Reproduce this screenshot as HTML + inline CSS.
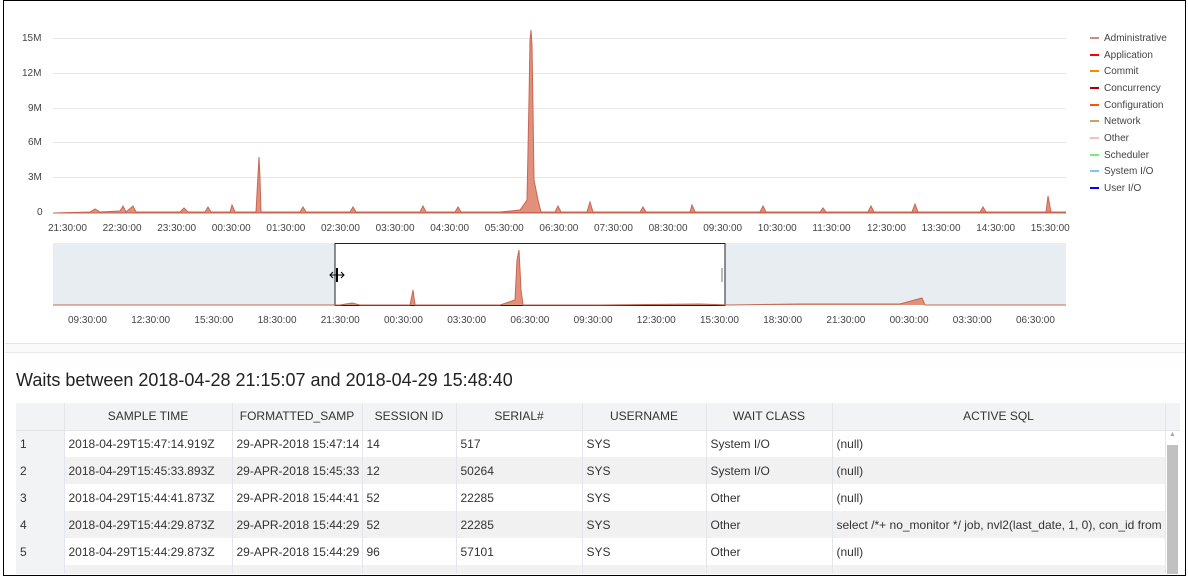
<!DOCTYPE html>
<html><head><meta charset="utf-8"><style>
body{margin:0;width:1188px;height:577px;background:#fff;font-family:"Liberation Sans",sans-serif;overflow:hidden;position:relative}
.frame{position:absolute;left:3px;top:0;width:1183px;height:576px;border:1px solid #000;box-sizing:border-box;z-index:5;pointer-events:none}
.lbl{position:absolute;font-size:10px;color:#444}
.leg{position:absolute;left:1090px;font-size:10px;color:#444}
.leg i{display:inline-block;width:9px;height:2px;margin-right:5px;vertical-align:middle}
.tw{position:absolute;left:16px;top:403px;width:1164px;height:171px;overflow:hidden}
table{border-collapse:collapse;font-size:12px;color:#333;table-layout:fixed;width:1164px}
td,th{height:27px;padding:0 4px;white-space:nowrap;overflow:hidden;text-overflow:clip;border-right:1px solid #e3e6ea;box-sizing:border-box}
th{background:#f1f3f5;font-weight:normal;text-align:center;border-bottom:1px solid #e3e6ea}
tr:nth-child(odd) td{background:#f1f1f1}
td:first-child{background:#f1f3f5!important}
</style></head><body>
<div class="frame"></div>
<div class="lbl" style="left:22px;top:33px">15M</div>
<div class="lbl" style="left:22px;top:68px">12M</div>
<div class="lbl" style="left:28px;top:103px">9M</div>
<div class="lbl" style="left:28px;top:137px">6M</div>
<div class="lbl" style="left:28px;top:172px">3M</div>
<div class="lbl" style="left:37px;top:207px">0</div>
<svg style="position:absolute;left:0;top:0" width="1188" height="340">
<g stroke="#e8e8e8"><line x1="53" y1="38.5" x2="1066" y2="38.5"/><line x1="53" y1="73.5" x2="1066" y2="73.5"/><line x1="53" y1="108.5" x2="1066" y2="108.5"/><line x1="53" y1="142.5" x2="1066" y2="142.5"/><line x1="53" y1="177.5" x2="1066" y2="177.5"/></g>
<path d="M53 213 L90 212 L95 209 L100 212 L120 211 L123 206 L126 212 L133 206 L136 212 L180 212 L184 208 L188 212 L205 212 L208 207 L211 212 L230 212 L232 205 L235 212 L256 212 L258 175 L259 157 L260 178 L261 212 L300 212 L303 207 L306 212 L350 212 L353 207 L356 212 L420 212 L423 206 L426 212 L455 212 L458 207 L461 212 L500 212 L520 210 L527 200 L529 100 L530 40 L531 30 L532 45 L533 110 L534 180 L536 190 L538 200 L541 212 L555 212 L558 206 L561 212 L587 212 L590 202 L593 212 L640 212 L643 207 L646 212 L690 212 L692 205 L695 212 L760 212 L763 206 L766 212 L820 212 L823 208 L826 212 L868 212 L871 206 L874 212 L912 212 L915 204 L918 212 L980 212 L983 207 L986 212 L1046 212 L1048 196 L1051 212 L1066 212 Z" fill="#e2907c" stroke="#c86650" stroke-width="1"/>
<line x1="53" y1="213" x2="1066" y2="213" stroke="#c86650"/>
<rect x="53" y="243" width="1013" height="62" fill="#e8edf1"/>
<rect x="335" y="243.5" width="390" height="62" fill="#fff" stroke="#222"/>
<path d="M53 305 L340 305 L352 303 L360 305 L410 305 L413 290 L415 305 L500 305 L515 300 L517 260 L519 250 L521 290 L523 305 L600 305 L700 304 L730 305 L800 304 L900 304 L922 298 L925 305 L1066 305" fill="#e2907c" stroke="#c86650" stroke-width="1"/>
<path d="M330 275 H344 M333 272 L330 275 L333 278 M341 272 L344 275 L341 278" stroke="#000" fill="none"/>
<rect x="336" y="268" width="2" height="14" fill="#000"/>
<rect x="721" y="268" width="2" height="14" fill="#bbb"/>
</svg>
<div style="position:absolute;left:5px;top:343px;width:1180px;height:8px;background:#fafafa;border-top:1px solid #e3e3e8;border-bottom:1px solid #e6eaef"></div>
<div class="leg" style="top:33px"><i style="background:#c98d84"></i>Administrative</div>
<div class="leg" style="top:50px"><i style="background:#f00"></i>Application</div>
<div class="leg" style="top:66px"><i style="background:#f80"></i>Commit</div>
<div class="leg" style="top:83px"><i style="background:#a00"></i>Concurrency</div>
<div class="leg" style="top:100px"><i style="background:#f50"></i>Configuration</div>
<div class="leg" style="top:116px"><i style="background:#c9a070"></i>Network</div>
<div class="leg" style="top:133px"><i style="background:#f4c0c0"></i>Other</div>
<div class="leg" style="top:150px"><i style="background:#7e7"></i>Scheduler</div>
<div class="leg" style="top:166px"><i style="background:#7cc6f0"></i>System I/O</div>
<div class="leg" style="top:183px"><i style="background:#00f"></i>User I/O</div>
<div id="xa"></div>
<script>
var a=["21:30:00","22:30:00","23:30:00","00:30:00","01:30:00","02:30:00","03:30:00","04:30:00","05:30:00","06:30:00","07:30:00","08:30:00","09:30:00","10:30:00","11:30:00","12:30:00","13:30:00","14:30:00","15:30:00"],h="";
a.forEach(function(t,i){h+='<div class="lbl" style="left:'+(48+i*54.6)+'px;top:223px">'+t+'</div>'});
var b=["09:30:00","12:30:00","15:30:00","18:30:00","21:30:00","00:30:00","03:30:00","06:30:00","09:30:00","12:30:00","15:30:00","18:30:00","21:30:00","00:30:00","03:30:00","06:30:00"];
b.forEach(function(t,i){h+='<div class="lbl" style="left:'+(68+i*63.2)+'px;top:315px">'+t+'</div>'});
document.getElementById("xa").innerHTML=h;
</script>
<div style="position:absolute;left:16px;top:370px;font-size:18px;color:#222">Waits between 2018-04-28 21:15:07 and 2018-04-29 15:48:40</div>
<div class="tw">
<table>
<colgroup><col style="width:48px"><col style="width:168px"><col style="width:130px"><col style="width:94px"><col style="width:126px"><col style="width:124px"><col style="width:126px"><col style="width:333px"><col style="width:15px"></colgroup>
<tr><th></th><th>SAMPLE TIME</th><th>FORMATTED_SAMP</th><th>SESSION ID</th><th>SERIAL#</th><th>USERNAME</th><th>WAIT CLASS</th><th>ACTIVE SQL</th><th></th></tr>
<tr><td>1</td><td>2018-04-29T15:47:14.919Z</td><td>29-APR-2018 15:47:14</td><td>14</td><td>517</td><td>SYS</td><td>System I/O</td><td>(null)</td><td rowspan="6" style="background:#fff;padding:0;vertical-align:top"><div style="height:14px;color:#aaa;font-size:7px;text-align:center">▲</div><div style="width:11px;margin-left:1px;height:130px;background:#c1c1c1"></div></td></tr>
<tr><td>2</td><td>2018-04-29T15:45:33.893Z</td><td>29-APR-2018 15:45:33</td><td>12</td><td>50264</td><td>SYS</td><td>System I/O</td><td>(null)</td></tr>
<tr><td>3</td><td>2018-04-29T15:44:41.873Z</td><td>29-APR-2018 15:44:41</td><td>52</td><td>22285</td><td>SYS</td><td>Other</td><td>(null)</td></tr>
<tr><td>4</td><td>2018-04-29T15:44:29.873Z</td><td>29-APR-2018 15:44:29</td><td>52</td><td>22285</td><td>SYS</td><td>Other</td><td>select /*+ no_monitor */ job, nvl2(last_date, 1, 0), con_id from sys</td></tr>
<tr><td>5</td><td>2018-04-29T15:44:29.873Z</td><td>29-APR-2018 15:44:29</td><td>96</td><td>57101</td><td>SYS</td><td>Other</td><td>(null)</td></tr>
<tr><td></td><td></td><td></td><td></td><td></td><td></td><td></td><td></td></tr>
</table>
</div>
</body></html>
